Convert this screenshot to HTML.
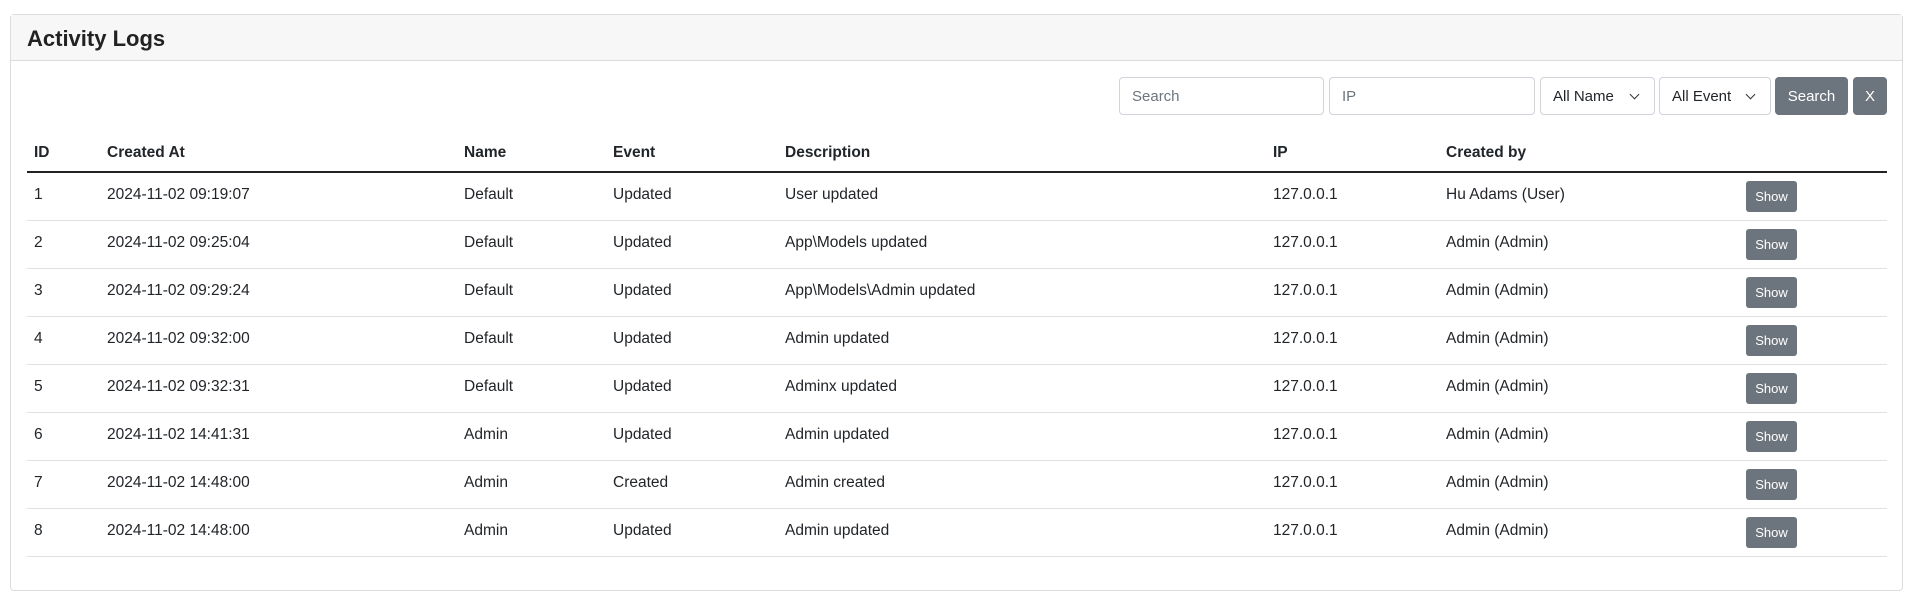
<!DOCTYPE html>
<html><head><style>
*{box-sizing:border-box;margin:0;padding:0}
body{width:1915px;height:605px;background:#fff;font-family:"Liberation Sans",sans-serif;color:#212529;position:relative;overflow:hidden}
.card{position:absolute;left:10px;top:14px;width:1893px;height:577px;border:1px solid #dcdcdc;border-radius:4px}
.hd{height:46px;background:#f7f7f7;border-bottom:1px solid #dcdcdc;padding-left:16px;font-size:22px;font-weight:bold;line-height:48px;color:#222}
.ctl{position:absolute;top:77px;height:38px;border:1px solid #ced4da;border-radius:4px;font-size:15px;line-height:38px;padding-left:12px;color:#6c757d}
.sel{color:#212529}
.sel:after{content:"";position:absolute;right:16px;top:13px;width:6px;height:6px;border-right:1.5px solid #333;border-bottom:1.5px solid #333;transform:rotate(45deg)}
.btn{position:absolute;top:77px;height:38px;background:#6c757d;color:#fff;border-radius:4px;font-size:15px;line-height:40px;text-align:center}
table{position:absolute;left:27px;top:130px;width:1860px;border-collapse:collapse;font-size:15.5px}
th{text-align:left;font-weight:bold;height:42px;border-bottom:2px solid #222;padding:4px 0 0 0}
td{height:48px;border-bottom:1px solid #dee2e6;padding:0 0 2px 0}
.c1{padding-left:7px}
.show{display:inline-block;background:#6c757d;color:#fff;font-size:13px;width:51px;height:31px;line-height:31px;text-align:center;border-radius:3px;vertical-align:middle}
td:last-child{padding-top:3px}
</style></head><body>
<div class="card"><div class="hd">Activity Logs</div></div>
<div class="ctl" style="left:1119px;width:205px">Search</div>
<div class="ctl" style="left:1329px;width:206px">IP</div>
<div class="ctl sel" style="left:1540px;width:115px">All Name</div>
<div class="ctl sel" style="left:1659px;width:112px">All Event</div>
<div class="btn" style="left:1775px;width:73px">Search</div>
<div class="btn" style="left:1853px;width:34px">X</div>
<table>
<colgroup><col style="width:80px"><col style="width:357px"><col style="width:149px"><col style="width:172px"><col style="width:488px"><col style="width:173px"><col style="width:300px"><col></colgroup>
<tr><th class="c1">ID</th><th>Created At</th><th>Name</th><th>Event</th><th>Description</th><th>IP</th><th>Created by</th><th></th></tr>
<tr><td class="c1">1</td><td>2024-11-02 09:19:07</td><td>Default</td><td>Updated</td><td>User updated</td><td>127.0.0.1</td><td>Hu Adams (User)</td><td><span class="show">Show</span></td></tr>
<tr><td class="c1">2</td><td>2024-11-02 09:25:04</td><td>Default</td><td>Updated</td><td>App\Models updated</td><td>127.0.0.1</td><td>Admin (Admin)</td><td><span class="show">Show</span></td></tr>
<tr><td class="c1">3</td><td>2024-11-02 09:29:24</td><td>Default</td><td>Updated</td><td>App\Models\Admin updated</td><td>127.0.0.1</td><td>Admin (Admin)</td><td><span class="show">Show</span></td></tr>
<tr><td class="c1">4</td><td>2024-11-02 09:32:00</td><td>Default</td><td>Updated</td><td>Admin updated</td><td>127.0.0.1</td><td>Admin (Admin)</td><td><span class="show">Show</span></td></tr>
<tr><td class="c1">5</td><td>2024-11-02 09:32:31</td><td>Default</td><td>Updated</td><td>Adminx updated</td><td>127.0.0.1</td><td>Admin (Admin)</td><td><span class="show">Show</span></td></tr>
<tr><td class="c1">6</td><td>2024-11-02 14:41:31</td><td>Admin</td><td>Updated</td><td>Admin updated</td><td>127.0.0.1</td><td>Admin (Admin)</td><td><span class="show">Show</span></td></tr>
<tr><td class="c1">7</td><td>2024-11-02 14:48:00</td><td>Admin</td><td>Created</td><td>Admin created</td><td>127.0.0.1</td><td>Admin (Admin)</td><td><span class="show">Show</span></td></tr>
<tr><td class="c1">8</td><td>2024-11-02 14:48:00</td><td>Admin</td><td>Updated</td><td>Admin updated</td><td>127.0.0.1</td><td>Admin (Admin)</td><td><span class="show">Show</span></td></tr>
</table>
</body></html>
